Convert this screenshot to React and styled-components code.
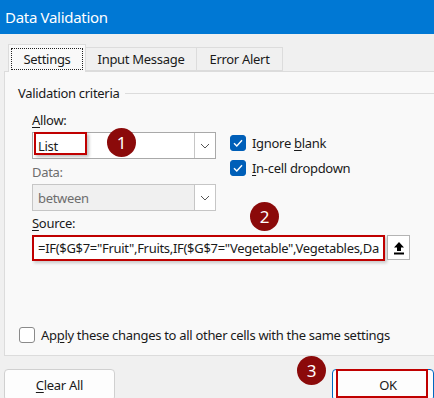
import styled, { createGlobalStyle } from "styled-components";

const GlobalStyle = createGlobalStyle`
  body {
    margin: 0;
    background: #f0f0f0;
    font-family: "Noto Sans", "Open Sans", sans-serif;
    font-size: 13px;
    letter-spacing: -0.3px;
    color: #1a1a1a;
  }
`;

const Window = styled.div`
  width: 434px;
  height: 398px;
  overflow: hidden;
  position: relative;
  background: #f0f0f0;
`;

const TitleBar = styled.div`
  height: 34px;
  background: #0078d4;
  color: #fff;
  font-size: 15px;
  display: flex;
  align-items: center;
  padding-left: 5px;
`;

const Tabs = styled.div`
  display: flex;
  align-items: flex-end;
  height: 27px;
  margin-top: 10px;
  padding-left: 8px;
`;

const Tab = styled.div`
  height: ${({ active }) => (active ? "28px" : "24px")};
  margin-bottom: ${({ active }) => (active ? "-1px" : "0")};
  width: ${({ w }) => w}px;
  box-sizing: border-box;
  justify-content: center;
  display: flex;
  align-items: center;
  background: ${({ active }) => (active ? "#f9f9f9" : "#f0f0f0")};
  border: 1px solid #dcdcdc;
  border-bottom: ${({ active }) => (active ? "none" : "1px solid #dcdcdc")};
  border-left: ${({ first }) => (first ? "1px solid #dcdcdc" : "none")};
  position: relative;
  z-index: ${({ active }) => (active ? 1 : 0)};
`;

const Focus = styled.span`
  border: 1px dotted #222;
  padding: 1px 11px;
`;

const Panel = styled.div`
  margin-left: 4px;
  width: 440px;
  height: 285px;
  background: #f9f9f9;
  border: 1px solid #dcdcdc;
  padding: 12px 0 0 13px;
  box-sizing: border-box;
  display: flex;
  flex-direction: column;
`;

const GroupHead = styled.div`
  display: flex;
  align-items: center;
  gap: 6px;
  &::after {
    content: "";
    flex: 1;
    height: 1px;
    background: #dcdcdc;
  }
`;

const Criteria = styled.div`
  display: flex;
  gap: 14px;
  margin-top: 9px;
  padding-left: 14px;
`;

const Column = styled.div`
  display: flex;
  flex-direction: column;
  width: 184px;
`;

const Label = styled.div`
  height: 18px;
  line-height: 18px;
  margin-bottom: 3px;
  padding-left: ${({ indent }) => indent || 0}px;
  color: ${({ muted }) => (muted ? "#6d6d6d" : "#1a1a1a")};
  margin-top: ${({ gap }) => gap || 0}px;
`;

const Select = styled.div`
  height: 27px;
  box-sizing: border-box;
  border: 1px solid ${({ disabled }) => (disabled ? "#c6c6c6" : "#a9a9a9")};
  background: ${({ disabled }) => (disabled ? "#f0f0f0" : "#fff")};
  color: ${({ disabled }) => (disabled ? "#6d6d6d" : "#1a1a1a")};
  display: flex;
  align-items: stretch;
  position: relative;
`;

const SelectText = styled.div`
  flex: 1;
  display: flex;
  align-items: center;
  padding-left: 5px;
`;

const Arrow = styled.div`
  width: 20px;
  border-left: 1px solid #c6c6c6;
  background: #fff;
  display: flex;
  align-items: center;
  justify-content: center;
`;

const Highlight = styled.div`
  position: absolute;
  left: 1px;
  top: -1px;
  width: 53px;
  height: 23px;
  box-sizing: border-box;
  border: 2px solid #c00000;
  box-shadow: 2px 2px 3px rgba(0, 0, 0, 0.25);
`;

const Checks = styled.div`
  display: flex;
  flex-direction: column;
  gap: 8px;
  padding-top: 23px;
`;

const CheckRow = styled.div`
  display: flex;
  align-items: center;
  gap: 6px;
  height: 17px;
`;

const Box = styled.div`
  width: 16px;
  height: 16px;
  box-sizing: border-box;
  border-radius: 3px;
  background: ${({ checked }) => (checked ? "#005fb8" : "#fff")};
  border: 1px solid ${({ checked }) => (checked ? "#005fb8" : "#8a8a8a")};
  display: flex;
  align-items: center;
  justify-content: center;
`;

const U = styled.span`
  text-decoration: underline;
  text-underline-offset: 2px;
`;

const SourceRow = styled.div`
  display: flex;
  gap: 2px;
  padding-left: 14px;
`;

const SourceInput = styled.div`
  width: 353px;
  height: 26px;
  box-sizing: border-box;
  border: 2px solid #c00000;
  background: #fff;
  box-shadow: 2px 2px 3px rgba(0, 0, 0, 0.2);
  display: flex;
  align-items: center;
  padding-left: 4px;
  white-space: nowrap;
  overflow: hidden;
`;

const PickButton = styled.div`
  width: 23px;
  height: 25px;
  box-sizing: border-box;
  border: 1px solid #b4b4b4;
  background: #fff;
  display: flex;
  align-items: center;
  justify-content: center;
`;

const ApplyRow = styled(CheckRow)`
  margin-top: auto;
  margin-bottom: 12px;
  margin-left: 1px;
`;

const Footer = styled.div`
  display: flex;
  justify-content: space-between;
  padding: 13px 0 0 4px;
`;

const Button = styled.div`
  width: ${({ wide }) => (wide ? 111 : 102)}px;
  height: 32px;
  box-sizing: border-box;
  border: 1px solid ${({ primary }) => (primary ? "#0067c0" : "#d0d0d0")};
  border-radius: 4px;
  background: #fdfdfd;
  display: flex;
  align-items: center;
  justify-content: center;
  position: relative;
`;

const OkLabel = styled.span`
  margin-left: 10px;
`;

const OkMark = styled.div`
  position: absolute;
  left: 3px;
  top: -1px;
  width: 92px;
  height: 29px;
  box-sizing: border-box;
  border: 2px solid #c00000;
`;

const Badge = styled.div`
  position: absolute;
  width: 29px;
  height: 29px;
  border-radius: 50%;
  background: #8b0a0a;
  color: #fff;
  font-size: 17px;
  letter-spacing: 0;
  display: flex;
  align-items: center;
  justify-content: center;
  z-index: 5;
`;

const Tick = () => (
  <svg width="10" height="8" viewBox="0 0 10 8">
    <path d="M1 4.2 L3.8 7 L9 1.2" fill="none" stroke="#fff" strokeWidth="1.4" />
  </svg>
);

const Chevron = () => (
  <svg width="10" height="6" viewBox="0 0 10 6">
    <path d="M1 1 L5 5 L9 1" fill="none" stroke="#555" strokeWidth="1" />
  </svg>
);

const App = () => {
  return (
    <Window>
      <GlobalStyle />
      <TitleBar>Data Validation</TitleBar>
      <Tabs>
        <Tab active first w={78}>
          <Focus>Settings</Focus>
        </Tab>
        <Tab w={111}>Input Message</Tab>
        <Tab w={86}>Error Alert</Tab>
      </Tabs>
      <Panel>
        <GroupHead>Validation criteria</GroupHead>
        <Criteria>
          <Column>
            <Label>
              <U>A</U>llow:
            </Label>
            <Select>
              <Highlight />
              <SelectText>List</SelectText>
              <Arrow>
                <Chevron />
              </Arrow>
            </Select>
            <Label muted gap={4}>
              Data:
            </Label>
            <Select disabled>
              <SelectText>between</SelectText>
              <Arrow>
                <Chevron />
              </Arrow>
            </Select>
          </Column>
          <Checks>
            <CheckRow>
              <Box checked>
                <Tick />
              </Box>
              <span>
                Ignore <U>b</U>lank
              </span>
            </CheckRow>
            <CheckRow>
              <Box checked>
                <Tick />
              </Box>
              <span>
                <U>I</U>n-cell dropdown
              </span>
            </CheckRow>
          </Checks>
        </Criteria>
        <Label indent={14} gap={3}>
          <U>S</U>ource:
        </Label>
        <SourceRow>
          <SourceInput>
            =IF($G$7="Fruit",Fruits,IF($G$7="Vegetable",Vegetables,Da
          </SourceInput>
          <PickButton>
            <svg width="12" height="14" viewBox="0 0 12 14">
              <path d="M6 1 L11 6.5 L8 6.5 L8 10 L4 10 L4 6.5 L1 6.5 Z" fill="#000" />
              <rect x="1" y="11.5" width="10" height="2" fill="#000" />
            </svg>
          </PickButton>
        </SourceRow>
        <ApplyRow>
          <Box />
          <span>
            Ap<U>p</U>ly these changes to all other cells with the same settings
          </span>
        </ApplyRow>
      </Panel>
      <Footer>
        <Button wide>
          <span>
            <U>C</U>lear All
          </span>
        </Button>
        <Button primary>
          <OkMark />
          <OkLabel>OK</OkLabel>
        </Button>
      </Footer>
      <Badge style={{ left: 107, top: 128 }}>1</Badge>
      <Badge style={{ left: 250, top: 202 }}>2</Badge>
      <Badge style={{ left: 297, top: 356 }}>3</Badge>
    </Window>
  );
};

export default App;
